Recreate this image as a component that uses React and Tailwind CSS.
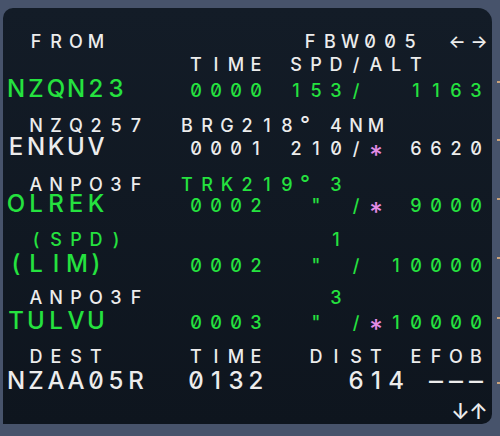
import React from 'react';

const C = { w: 'text-[#ececec]', g: 'text-[#25e23f]', m: 'text-[#e48ce6]' };
const S = { s: 'text-[18px]', l: 'text-[24px]' };

const rows = [
  { cls: 'h-[23px] pt-[7px]', segs: [[' FROM', 'w', 's'], ['         ', 'w', 's'], { sp: 'w-[14px]' }, ['FBW005', 'w', 's'], { sp: 'w-[27px]' }, ['←', 'w', 's', 'w-[20px]'], ['→', 'w', 's', 'w-[24px]']] },
  { cls: 'h-[27px] pt-[7px]', segs: [['         TIME SPD/ALT', 'w', 's']] },
  { cls: 'h-[30px] pt-[1px]', segs: [['NZQN23', 'g', 'l'], ['   0000 153/  1163', 'g', 's']] },
  { cls: 'h-[28px] pt-[7px]', segs: [[' NZQ257 ', 'w', 's'], { sp: 'w-[11px]' }, ['BRG218', 'w', 's'], ['°', 'w', 's', 'w-[16px]'], { sp: 'w-[13px]' }, ['4NM', 'w', 's']] },
  { cls: 'h-[31px] pt-[1px]', segs: [['ENKUV', 'w', 'l'], ['    0001 210/', 'w', 's'], ['*', 'm', 's'], [' 6620', 'w', 's']] },
  { cls: 'h-[26px] pt-[7px]', segs: [[' ANPO3F ', 'w', 's'], { sp: 'w-[11px]' }, ['TRK219', 'g', 's'], ['°', 'g', 's', 'w-[16px]'], { sp: 'w-[13px]' }, ['3', 'g', 's']] },
  { cls: 'h-[33px] pt-[1px]', segs: [['OLREK', 'g', 'l'], ['    0002  " /', 'g', 's'], ['*', 'm', 's'], [' 9000', 'g', 's']] },
  { cls: 'h-[27px] pt-[7px]', segs: [[' (SPD)          1', 'g', 's']] },
  { cls: 'h-[31px] pt-[1px]', segs: [['(LIM)', 'g', 'l'], ['    0002  " / 10000', 'g', 's']] },
  { cls: 'h-[26px] pt-[7px]', segs: [[' ANPO3F', 'w', 's'], ['         3', 'g', 's']] },
  { cls: 'h-[33px] pt-[1px]', segs: [['TULVU', 'g', 'l'], ['    0003  " /', 'g', 's'], ['*', 'm', 's'], ['10000', 'g', 's']] },
  { cls: 'h-[27px] pt-[7px]', segs: [[' DEST    TIME  DIST EFOB', 'w', 's']] },
  { cls: 'h-[30px] pt-[1px]', segs: [['NZAA05R  0132    614 ---', 'w', 'l']] },
  { cls: 'h-[26px] pt-[1px]', segs: [['                      ', 'w', 'l'], { sp: 'w-[5px]' }, ['↓', 'w', 'a', 'w-[18px]'], ['↑', 'w', 'a', 'w-[18px]']] },
];

function cellExtra(ch, size) {
  if (ch === '*') return 'translate-y-[6px] scale-[1.45]';
  if (ch === '°') return 'text-[22px]';
  if (ch === '-') return 'scale-x-[1.8]';
  if (size === 'a') return 'text-[22px]';
  return '';
}

function Row({ cls, segs }) {
  const cells = [];
  segs.forEach((seg, i) => {
    if (!Array.isArray(seg)) {
      cells.push(<span key={`${i}`} className={`inline-block leading-none text-[18px] ${seg.sp}`}>{'\u00a0'}</span>);
      return;
    }
    const [text, col, size, width] = seg;
    Array.from(text).forEach((ch, j) => {
      cells.push(
        <span
          key={`${i}-${j}`}
          className={`inline-block shrink-0 text-center leading-none ${width || 'w-[20px]'} ${C[col]} ${S[size] || ''} ${cellExtra(ch, size)}`}
        >
          {ch === ' ' ? '\u00a0' : ch}
        </span>
      );
    });
  });
  return <div className={`flex items-baseline whitespace-pre ${cls}`}>{cells}</div>;
}

export default function App() {
  return (
    <div className="relative w-[500px] h-[436px] overflow-hidden bg-[#47536b] pt-[8px] pl-[3px] font-['Inter',sans-serif] font-medium slashed-zero">
      <div className="w-[489px] h-[416px] rounded-tl-[10px] rounded-tr-[14px] rounded-br-[10px] bg-gradient-to-b from-[#131c27] to-[#0e151e] pt-[18px] pl-[3px] flex flex-col">
        {rows.map((r, i) => (
          <Row key={i} cls={r.cls} segs={r.segs} />
        ))}
      </div>
      <div className="absolute right-0 top-0 flex flex-col items-end">
        <div className="mt-[81px] w-[3px] h-[2px] bg-[#c9a27a]" />
        <div className="mt-[56px] w-[3px] h-[2px] bg-[#c9a27a]" />
        <div className="mt-[57px] w-[3px] h-[2px] bg-[#c9a27a]" />
        <div className="mt-[57px] w-[3px] h-[2px] bg-[#c9a27a]" />
        <div className="mt-[58px] w-[3px] h-[2px] bg-[#c9a27a]" />
        <div className="mt-[63px] w-[3px] h-[2px] bg-[#c9a27a]" />
      </div>
    </div>
  );
}
